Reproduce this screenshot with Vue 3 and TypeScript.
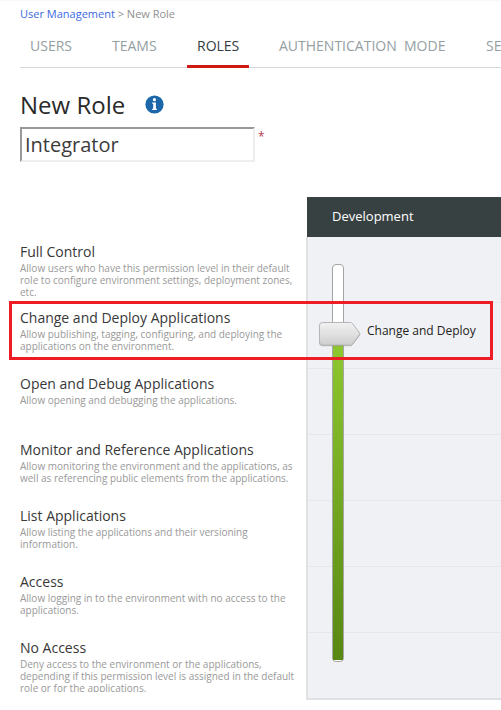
<script setup lang="ts">
import { ref } from 'vue'

interface Level {
  title: string
  lines: string[]
}

const tabs: { label: string; kind: string }[] = [
  { label: 'USERS', kind: 'users' },
  { label: 'TEAMS', kind: 'teams' },
  { label: 'ROLES', kind: 'active' },
  { label: 'AUTHENTICATION  MODE', kind: 'auth' },
  { label: 'SE', kind: 'settings' },
]

const roleName = ref('Integrator')

const levels: Level[] = [
  { title: 'Full Control', lines: ['Allow users who have this permission level in their default', 'role to configure environment settings, deployment zones,', 'etc.'] },
  { title: 'Change and Deploy Applications', lines: ['Allow publishing, tagging, configuring, and deploying the', 'applications on the environment.'] },
  { title: 'Open and Debug Applications', lines: ['Allow opening and debugging the applications.'] },
  { title: 'Monitor and Reference Applications', lines: ['Allow monitoring the environment and the applications, as', 'well as referencing public elements from the applications.'] },
  { title: 'List Applications', lines: ['Allow listing the applications and their versioning', 'information.'] },
  { title: 'Access', lines: ['Allow logging in to the environment with no access to the', 'applications.'] },
  { title: 'No Access', lines: ['Deny access to the environment or the applications,', 'depending if this permission level is assigned in the default', 'role or for the applications.'] },
]
</script>

<template>
  <main class="page">
    <nav class="crumbs"><a>User Management</a> &gt; New Role</nav>
    <nav class="tabs">
      <a v-for="tab in tabs" :key="tab.kind" class="tab" :class="tab.kind">{{ tab.label }}</a>
    </nav>
    <header class="heading">
      <h1>New Role</h1>
      <svg class="info" width="19" height="19" viewBox="0 0 19 19">
        <circle cx="9.500" cy="9.5" r="9.1" fill="#1b67aa" />
        <circle cx="9.4" cy="4.7" r="1.6" fill="#fff" />
        <path d="M7.200 7.400h3.700v6.300h1v1.300H7.200v-1.300h1V8.700h-1z" fill="#fff" />
      </svg>
    </header>
    <div class="field">
      <input v-model="roleName" class="name" type="text" spellcheck="false" />
      <span class="required">*</span>
    </div>
    <section class="matrix">
      <div class="levels">
        <article v-for="level in levels" :key="level.title" class="level">
          <h2>{{ level.title }}</h2>
          <div class="desc"><div v-for="line in level.lines" :key="line">{{ line }}</div></div>
        </article>
      </div>
      <div class="env">
        <div class="env-head">Development</div>
        <div class="env-body">
          <div v-for="level in levels" :key="level.title" class="cell"></div>
          <div class="track"><div class="fill"></div></div>
          <div class="handle">
            <svg width="42" height="25" viewBox="0 0 42 25">
              <defs>
                <linearGradient id="knob" x1="0" y1="0" x2="0" y2="1">
                  <stop offset="0" stop-color="#f1f1f1" />
                  <stop offset="0.5" stop-color="#e1e1e1" />
                  <stop offset="1" stop-color="#cdcdcd" />
                </linearGradient>
              </defs>
              <path d="M3.5 1h28q1.2 0 2 1l7 9.2q.6.8 0 1.6l-7 9.200q-.8 1.2-2 1.2h-28q-3 0-3-3V4q0-3 3-3z" transform="translate(0 .5)" fill="none" stroke="#777" stroke-opacity=".55" />
              <path d="M3.5.5h28q1.2 0 2 1l7 9.400q.6.8 0 1.600l-7 9.600q-.8 1-2 1h-28q-3 0-3-3v-16.600q0-3 3-3z" fill="url(#knob)" stroke="#b5b5b5" />
            </svg>
            <span>Change and Deploy</span>
          </div>
        </div>
      </div>
      <div class="highlight"></div>
    </section>
  </main>
</template>

<style>
body {
  background: #fff;
}
</style>

<style scoped>
.page {
  width: 501px;
  height: 710px;
  box-sizing: border-box;
  padding-left: 20px;
  overflow: hidden;
  border-top: 1px solid #f8f8f8;
  font-family: 'Open Sans', sans-serif;
  color: #333;
}
.crumbs {
  height: 26px;
  padding-top: 5px;
  box-sizing: border-box;
  font-size: 11px;
  line-height: 16px;
  color: #8f8f8f;
}
.crumbs a {
  color: #3b69e0;
}
.tabs {
  display: flex;
  height: 41px;
  box-sizing: border-box;
  border-bottom: 1px solid #d3d8d8;
  white-space: pre;
}
.tab {
  flex: none;
  height: 41px;
  box-sizing: border-box;
  padding: 9px 10px 0;
  font-size: 14px;
  line-height: 20px;
  color: #94a0a2;
}
.users {
  width: 82px;
}
.teams {
  width: 85px;
}
.active {
  width: 62px;
  color: #363c3f;
  border-bottom: 3px solid #cc1a13;
}
.auth {
  width: 207px;
  margin-left: 20px;
}
.heading {
  display: flex;
  height: 59px;
}
h1 {
  width: 125px;
  margin: 19px 0 0;
  font-size: 24px;
  line-height: 36px;
  font-weight: 400;
  color: #2a2a2a;
}
.info {
  margin-top: 27px;
}
.field {
  display: flex;
  height: 70px;
}
.name {
  width: 235px;
  height: 35px;
  box-sizing: border-box;
  padding: 0 3px;
  border: 2px solid #eee;
  border-top-color: #999;
  border-left-color: #999;
  border-radius: 0;
  outline: 0;
  font-family: inherit;
  font-size: 20px;
  color: #3c3c3c;
}
.required {
  padding: 2px 0 0 3px;
  font-size: 12px;
  line-height: 16px;
  color: #b94252;
}
.matrix {
  position: relative;
  display: flex;
}
.levels {
  width: 286px;
  padding-top: 39px;
}
.level {
  height: 66px;
  padding-top: 6px;
  box-sizing: border-box;
  white-space: nowrap;
}
.level h2 {
  margin: 0;
  font-size: 14px;
  line-height: 20px;
  font-weight: 400;
  color: #383838;
}
.desc {
  height: 34px;
  font-size: 10px;
  line-height: 12px;
  color: #999;
}
.level:last-child .desc {
  overflow: hidden;
}
.env {
  flex: 1;
}
.env-head {
  height: 40px;
  margin-left: 1px;
  padding-left: 25px;
  font-size: 13px;
  line-height: 39px;
  color: #fff;
  background: #384142;
}
.env-body {
  position: relative;
  height: 463px;
  box-sizing: border-box;
  border-left: 2px solid #dfe1e2;
  border-bottom: 2px solid #dfe1e2;
  background: #f0f1f4;
}
.cell {
  height: 66px;
  box-sizing: border-box;
  border-bottom: 1px solid #e5e8ea;
}
.cell:nth-child(7) {
  border: 0;
}
.track {
  position: absolute;
  left: 24px;
  top: 27px;
  width: 12px;
  height: 398px;
  box-sizing: border-box;
  padding-top: 70px;
  border: 1px solid #a5a5a5;
  border-radius: 4px;
  background: #fff;
}
.fill {
  height: 325px;
  background: linear-gradient(#8fc92f, #588713);
}
.handle {
  position: absolute;
  left: 11px;
  top: 85px;
  display: flex;
  font-size: 12px;
  line-height: 18px;
  color: #222;
  white-space: nowrap;
}
.handle span {
  margin-left: 6px;
}
.highlight {
  position: absolute;
  left: -11px;
  top: 104px;
  width: 484px;
  height: 59px;
  box-sizing: border-box;
  border: 3px solid #ee1c25;
}
</style>
